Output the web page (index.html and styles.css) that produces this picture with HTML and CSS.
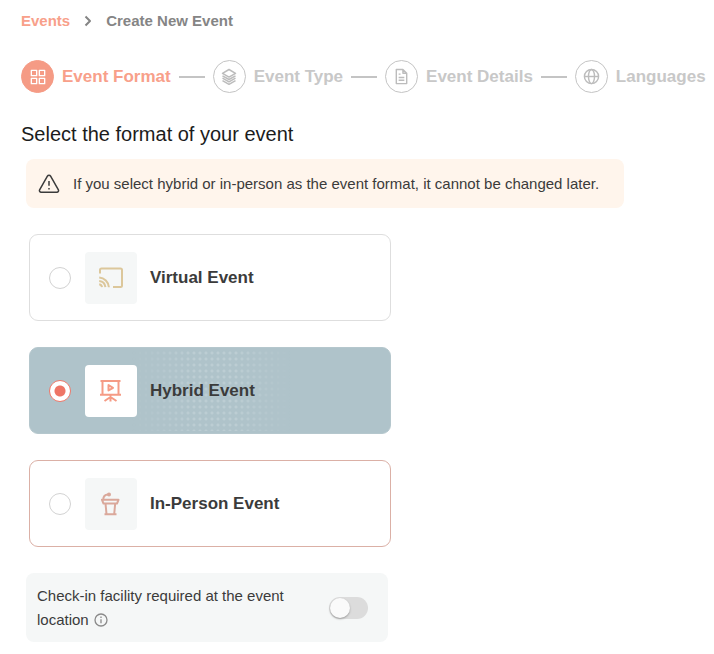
FILE: index.html
```html
<!DOCTYPE html>
<html lang="en">
<head>
  <meta charset="utf-8">
  <meta name="viewport" content="width=device-width, initial-scale=1">
  <title>Create New Event</title>
  <link rel="stylesheet" href="styles.css">
</head>
<body>

<nav class="breadcrumb">
  <a href="#">Events</a>
  <svg width="8" height="12" viewBox="0 0 8 12"><path d="M1.500 1.500 6 6l-4.500 4.500"/></svg>
  <span>Create New Event</span>
</nav>

<ol class="steps">
  <li class="step active">
    <span class="step-icon">
      <svg width="16" height="16" viewBox="0 0 18 18"><path d="M1.500 1.500h6v6h-6zM10.500 1.500h6v6h-6zM1.500 10.500h6v6h-6zM10.500 10.500h6v6h-6z"/></svg>
    </span>
    Event Format
  </li>
  <li class="step">
    <span class="step-icon">
      <svg width="18" height="18" viewBox="0 0 18 18"><path d="M9 1.500 15.500 5.300 9 9.100 2.500 5.300zM2.500 7.800 9 11.500l6.500-3.700M2.500 10.200 9 13.900l6.500-3.700M2.500 12.600 9 16.300l6.500-3.700"/></svg>
    </span>
    Event Type
  </li>
  <li class="step">
    <span class="step-icon">
      <svg width="17" height="17" viewBox="0 0 18 18"><path d="M3.500 1.500h7l4 4v11h-11zM10.500 1.500v4h4M6 6.500h2M6 10h6M6 13h6"/></svg>
    </span>
    Event Details
  </li>
  <li class="step">
    <span class="step-icon">
      <svg width="17" height="17" viewBox="0 0 18 18"><circle cx="9" cy="9" r="7.500"/><ellipse cx="9" cy="9" rx="3.200" ry="7.500"/><path d="M1.500 9h15"/></svg>
    </span>
    Languages
  </li>
</ol>

<main>
  <h1>Select the format of your event</h1>

  <div class="alert">
    <svg width="22" height="20" viewBox="0 0 22 20"><path d="M9.400 2.200 1.600 15.800a1.700 1.700 0 0 0 1.500 2.500h15.800a1.700 1.700 0 0 0 1.500-2.500L12.600 2.200a1.850 1.850 0 0 0-3.200 0zM11 7v4.800M11 14v1.500"/></svg>
    <p>If you select hybrid or in-person as the event format, it cannot be changed later.</p>
  </div>

  <form class="options">
    <label class="card">
      <input type="radio" name="format" value="virtual">
      <span class="card-icon virtual">
        <svg width="26" height="22" viewBox="0 0 26 22"><path d="M2 6.500V3a1.500 1.500 0 0 1 1.500-1.500h19A1.500 1.500 0 0 1 24 3v15.500a1.500 1.500 0 0 1-1.500 1.500H15M1.200 17.200a3.400 3.400 0 0 1 2.800 3M1.200 14a7 7 0 0 1 6.200 6.200M1.200 10.500a10.500 10.500 0 0 1 9.700 9.700"/></svg>
      </span>
      <span class="card-title">Virtual Event</span>
    </label>

    <label class="card selected">
      <input type="radio" name="format" value="hybrid" checked>
      <span class="card-icon hybrid">
        <svg width="24" height="24" viewBox="0 0 24 24"><path d="M1.500 2h20M3.500 2v13.500M19.500 2v13.500M1 15.800h21M11.500 16v6.500M11.500 18 5.500 22M11.500 18l6 4M9.500 6v5.500l4.500-2.700z"/></svg>
      </span>
      <span class="card-title">Hybrid Event</span>
    </label>

    <label class="card in-person-card">
      <input type="radio" name="format" value="in-person">
      <span class="card-icon in-person">
        <svg width="22" height="24" viewBox="0 0 22 24"><path d="M3.200 8C3.200 4.500 5 2.800 8 2.600M2 7.800h16.500l-1.500 3.700H3.500zM5.500 11.500 6.500 22M15.200 11.500 14.200 22M4.500 22.200h12"/><circle cx="9" cy="2.500" r="1"/></svg>
      </span>
      <span class="card-title">In-Person Event</span>
    </label>

    <div class="checkin">
      <label for="checkin">Check-in facility required at the event location
        <svg width="14" height="14" viewBox="0 0 14 14"><circle cx="7" cy="7" r="6"/><path d="M7 6.200v4M7 3.600v1.400"/></svg>
      </label>
      <input class="switch" type="checkbox" id="checkin" role="switch">
    </div>
  </form>
</main>

</body>
</html>
```
FILE: styles.css
```css
* {
  box-sizing: border-box;
}
body {
  margin: 0;
  padding: 12px 0 12px 21px;
  background: #fff;
  color: #3b3b3b;
  font-family: "Liberation Sans", Arial, sans-serif;
  font-size: 15px;
}
svg {
  flex: none;
  fill: none;
  stroke: currentColor;
  stroke-width: 1.5;
  stroke-linejoin: round;
}
.breadcrumb {
  display: flex;
  align-items: center;
  gap: 14px;
  line-height: 18px;
  font-weight: bold;
  color: #858585;
}
.breadcrumb a {
  color: #f8a08a;
  text-decoration: none;
}
.breadcrumb svg {
  stroke-width: 2;
}
.steps {
  display: flex;
  gap: 8px;
  margin: 30px 0 0;
  padding: 0;
  list-style: none;
}
.step {
  display: flex;
  align-items: center;
  gap: 8px;
  font-size: 17px;
  font-weight: bold;
  white-space: nowrap;
  color: #c8c8c8;
}
.step:not(:last-child)::after {
  content: "";
  width: 26px;
  height: 2px;
  background: #c4c4c4;
}
.step-icon {
  display: flex;
  align-items: center;
  justify-content: center;
  width: 33px;
  height: 33px;
  border: 1px solid #c4c4c4;
  border-radius: 50%;
  color: #bcbcbc;
}
.step.active {
  color: #f8a08a;
}
.active .step-icon {
  border-color: #f59b85;
  background: #f59b85;
  color: #fff;
}
h1 {
  margin: 29px 0 0;
  font-size: 20px;
  line-height: 24px;
  font-weight: normal;
  color: #1c1c1c;
}
.alert {
  display: flex;
  align-items: center;
  gap: 13px;
  max-width: 598px;
  margin: 13px 0 0 5px;
  padding: 14px 12px;
  border-radius: 8px;
  background: #fff5ec;
}
.alert p {
  margin: 0;
  line-height: 21px;
}
.options {
  display: flex;
  flex-direction: column;
  gap: 26px;
  max-width: 370px;
  margin-top: 26px;
  padding: 0 0 0 8px;
}
.card {
  display: flex;
  align-items: center;
  gap: 13px;
  position: relative;
  min-height: 87px;
  padding: 16px 19px;
  border: 1px solid #dedede;
  border-radius: 9px;
  overflow: hidden;
}
.card.selected {
  border-color: #b5c7cd;
  background: #afc3ca;
}
/* dotted texture behind the title */
.card.selected::before {
  content: "";
  position: absolute;
  inset: 2px 99px 2px 101px;
  background: radial-gradient(circle at 3px 3px, #bccdd3 1px, transparent 2px) 0 0 / 6px 6px;
  mask-image: linear-gradient(to right, transparent, #000 40%, #000 65%, transparent);
}
.in-person-card {
  border-color: #dbb0a6;
}
.card input {
  appearance: none;
  flex: none;
  width: 22px;
  height: 22px;
  margin: 0 1px 0 0;
  border: 1px solid #d2d2d2;
  border-radius: 50%;
  background: #fff;
}
.card input:checked {
  border-color: #f07a6b;
  background: radial-gradient(circle, #ee7566 5px, #fff 6px);
}
.card-icon {
  display: flex;
  align-items: center;
  justify-content: center;
  position: relative;
  width: 52px;
  height: 52px;
  border-radius: 4px;
  background: #f5f7f7;
}
.card-icon svg {
  stroke-width: 2;
}
.virtual {
  color: #dcc79b;
}
.hybrid {
  background: #fff;
  color: #f59b85;
}
.in-person {
  color: #daa89b;
}
.card-title {
  position: relative;
  font-size: 17px;
  font-weight: bold;
}
.checkin {
  display: flex;
  align-items: center;
  justify-content: space-between;
  gap: 20px;
  margin: 0 3px 0 -3px;
  padding: 11px 20px 10px 11px;
  border-radius: 8px;
  background: #f5f7f7;
}
.checkin label {
  max-width: 270px;
  line-height: 24px;
}
.checkin svg {
  margin-left: 1px;
  vertical-align: -2px;
  stroke: #8a8a8a;
  stroke-width: 1.3;
}
.switch {
  appearance: none;
  flex: none;
  display: flex;
  width: 39px;
  height: 22px;
  margin: 0;
  border-radius: 11px;
  background: #dcdcdc;
}
.switch::before {
  content: "";
  width: 20px;
  height: 20px;
  margin: 1px;
  border-radius: 50%;
  background: #fafafa;
  box-shadow: 0 1px 2px #999;
}
.switch:checked {
  justify-content: flex-end;
  background: #f59b85;
}
```
